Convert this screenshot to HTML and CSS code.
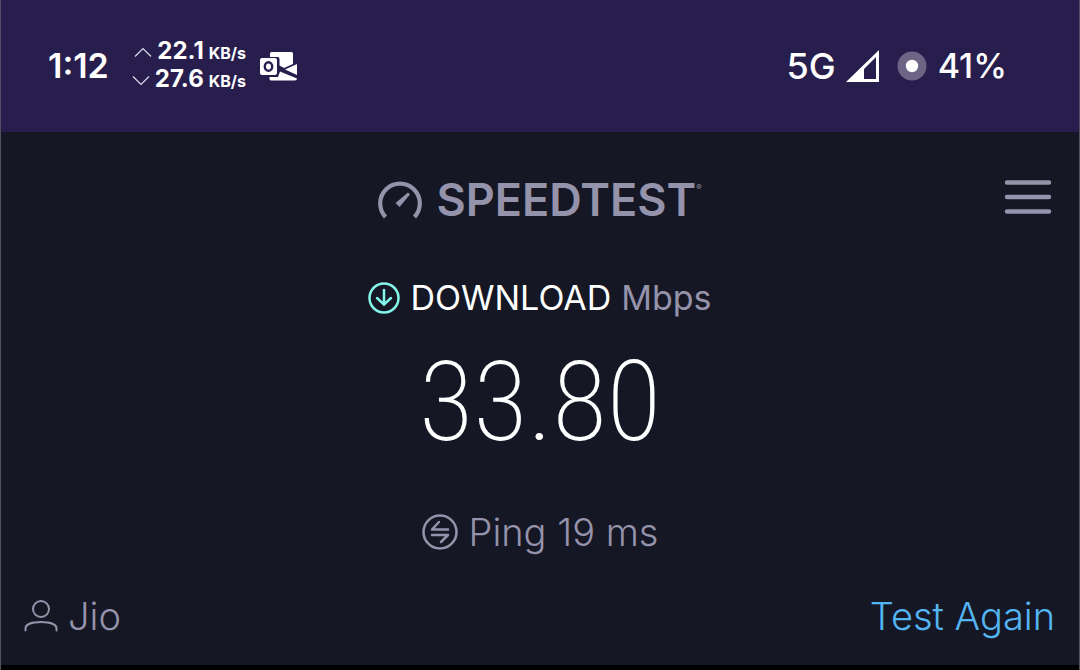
FILE: index.html
```html
<!DOCTYPE html>
<html lang="en">
<head>
<meta charset="utf-8">
<meta name="viewport" content="width=device-width, initial-scale=1">
<title>Speedtest</title>
<link rel="stylesheet" href="styles.css">
</head>
<body>
<div class="screen">
  <header class="status">
    <div class="status-left">
      <time class="clock">1:12</time>
      <div class="rates">
        <div class="rate">
          <svg class="chevron" viewBox="0 0 16 9"><path d="M0 8.500l8-8 8 8"/></svg>
          <span class="rate-value">22.1</span><span class="rate-unit">KB/s</span>
        </div>
        <div class="rate">
          <svg class="chevron" viewBox="0 0 16 9"><path d="M0 .5l8 8 8-8"/></svg>
          <span class="rate-value">27.6</span><span class="rate-unit">KB/s</span>
        </div>
      </div>
      <svg class="mail" viewBox="0 0 37 29" role="img" aria-label="Outlook">
        <path fill="#fff" d="M11.500 0h20A1.500 1.500 0 0 1 33 1.500V12l-9 4-4.500-2.500V7a2 2 0 0 0-2-2H10V1.500A1.500 1.500 0 0 1 11.500 0z"/>
        <path fill="#fff" d="M25 17.500l12-5.500v11zM9.500 25H18l2-5.500 17 7a2 2 0 0 1-2 2H12a2 2 0 0 1-2.500-2z"/>
        <rect x="0" y="6" width="17" height="17" rx="2" fill="#fff"/>
        <ellipse cx="8.500" cy="14.500" rx="3.700" ry="4.300" fill="none" stroke="#271e4d" stroke-width="2.400"/>
      </svg>
    </div>
    <div class="status-right">
      <span class="network">5G</span>
      <svg class="signal" viewBox="0 0 33 32" role="img" aria-label="Signal"><path fill="#fff" fill-rule="evenodd" d="M33 0v32H0zM30 7L18 19v10h12z"/></svg>
      <svg class="battery" viewBox="0 0 30 30" role="img" aria-label="Battery"><circle cx="15" cy="15" r="14.500" fill="#6e6586"/><circle cx="15" cy="15" r="6.200" fill="#fff"/></svg>
      <span class="percent">41%</span>
    </div>
  </header>
  <main class="panel">
    <div class="topbar">
      <h1 class="brand">
        <svg class="gauge" viewBox="0 0 44 38"><path fill="none" stroke="#9593ab" stroke-width="4.200" d="M7.500 36A19.800 19.800 0 1 1 36.500 36"/><path fill="#9593ab" d="M30 11.500l2 2L21.500 26 17.500 22z"/></svg>
        <span class="wordmark">SPEEDTEST</span><span class="mark">®</span>
      </h1>
      <button class="menu" type="button" aria-label="Menu"><svg viewBox="0 0 48 34"><path d="M3 2.500h42M3 17h42M3 31.500h42"/></svg></button>
    </div>
    <section class="result">
      <h2 class="metric">
        <svg class="down" viewBox="0 0 32 32"><circle cx="16" cy="16" r="14.500"/><path d="M16 8v14M9 16l7 6.500 7-6.500"/></svg>
        <span class="metric-name">DOWNLOAD</span><span class="metric-unit">Mbps</span>
      </h2>
      <p class="speed">33.80</p>
      <p class="ping">
        <svg class="swap" viewBox="0 0 36 36"><circle cx="18" cy="18" r="16.500"/><path d="M26 15.500H10l7-7.500M10 21h16l-7 7"/></svg>
        <span>Ping 19 ms</span>
      </p>
    </section>
    <footer class="bottom">
      <div class="provider">
        <svg class="person" viewBox="0 0 34 32"><circle cx="17" cy="9" r="8"/><path d="M1.500 30.500v-2c0-4 6-6.500 15.500-6.500S32.500 24.500 32.500 28.500v2"/></svg>
        <span>Jio</span>
      </div>
      <button class="again" type="button">Test Again</button>
    </footer>
  </main>
</div>
</body>
</html>
```
FILE: styles.css
```css
* { box-sizing: border-box; }
body { margin: 0; background: #000; font-family: Inter, "Noto Sans", sans-serif; }
h1, h2, p { margin: 0; font-weight: 400; }
svg { display: block; flex: none; overflow: visible; }
button { padding: 0; border: 0; background: none; font: inherit; cursor: pointer; }

.screen { min-height: 100vh; display: flex; flex-direction: column; border: solid #53515f; border-width: 0 1px; padding-bottom: 5px; }
.status { display: flex; justify-content: space-between; align-items: center; padding: 39px 72px 39px 47px; background: #271e4d; color: #fff; }
.status-left, .status-right { display: flex; align-items: center; }
.clock { font-size: 34px; font-weight: 600; line-height: 48px; }
.rates { margin-left: 24px; display: grid; gap: 2px; }
.rate { display: flex; align-items: baseline; justify-content: flex-end; line-height: 24px; }
.chevron { width: 16px; height: 9px; align-self: center; fill: none; stroke: #ddd9e8; stroke-width: 1.2; margin-right: 6px; }
.rate-value { font-size: 24px; font-weight: 700; }
.rate-unit { margin-left: 5px; font-size: 16px; font-weight: 700; }
.mail { width: 37px; height: 29px; margin-left: 14px; }
.network { font-size: 36px; line-height: 48px; font-weight: 500; }
.signal { width: 33px; height: 32px; margin-left: 10px; }
.battery { width: 30px; height: 30px; margin: 0 11px 0 18px; }
.percent { font-size: 34px; line-height: 48px; font-weight: 500; }

.panel { flex: 1; display: flex; flex-direction: column; background: #151724; color: #9593ab; }
.topbar { display: grid; grid-template-columns: 1fr auto 1fr; align-items: center; padding: 41px 27px 0; }
.brand { grid-column: 2; display: flex; align-items: center; }
.gauge { width: 44px; height: 38px; margin-right: 14px; }
.wordmark { font-size: 45px; line-height: 54px; font-weight: 600; }
.mark { align-self: flex-start; padding-top: 8px; font-size: 8px; line-height: 12px; }
.menu { justify-self: end; margin-bottom: 6px; }
.menu svg { width: 48px; height: 34px; fill: none; stroke: #9593ab; stroke-width: 4.5; stroke-linecap: round; }

.result { display: flex; flex-direction: column; align-items: center; }
.metric { display: flex; align-items: center; margin-top: 50px; font-size: 34px; line-height: 42px; }
.down { width: 32px; height: 32px; margin-right: 10px; fill: none; stroke: #84f5e9; stroke-width: 2.5; stroke-linecap: round; }
.metric-name { color: #fff; margin-right: 10px; }
.speed { margin-top: 18px; color: #fff; font-family: "Roboto Condensed", Roboto, sans-serif; font-size: 112px; font-weight: 200; line-height: 130px; }
.ping { display: flex; align-items: center; margin-top: 43px; font-size: 38px; line-height: 44px; font-weight: 300; }
.swap { width: 36px; height: 36px; margin-right: 11px; fill: none; stroke: #9593ab; stroke-width: 2.5; stroke-linecap: round; stroke-linejoin: round; }

.bottom { display: flex; justify-content: space-between; align-items: center; margin-top: auto; padding: 0 24px 27px 23px; font-size: 38px; line-height: 44px; font-weight: 300; }
.provider { display: flex; align-items: center; gap: 10px; }
.person { width: 34px; height: 32px; fill: none; stroke: #9593ab; stroke-width: 2; stroke-linecap: round; }
.again { color: #54b5f3; }
```
